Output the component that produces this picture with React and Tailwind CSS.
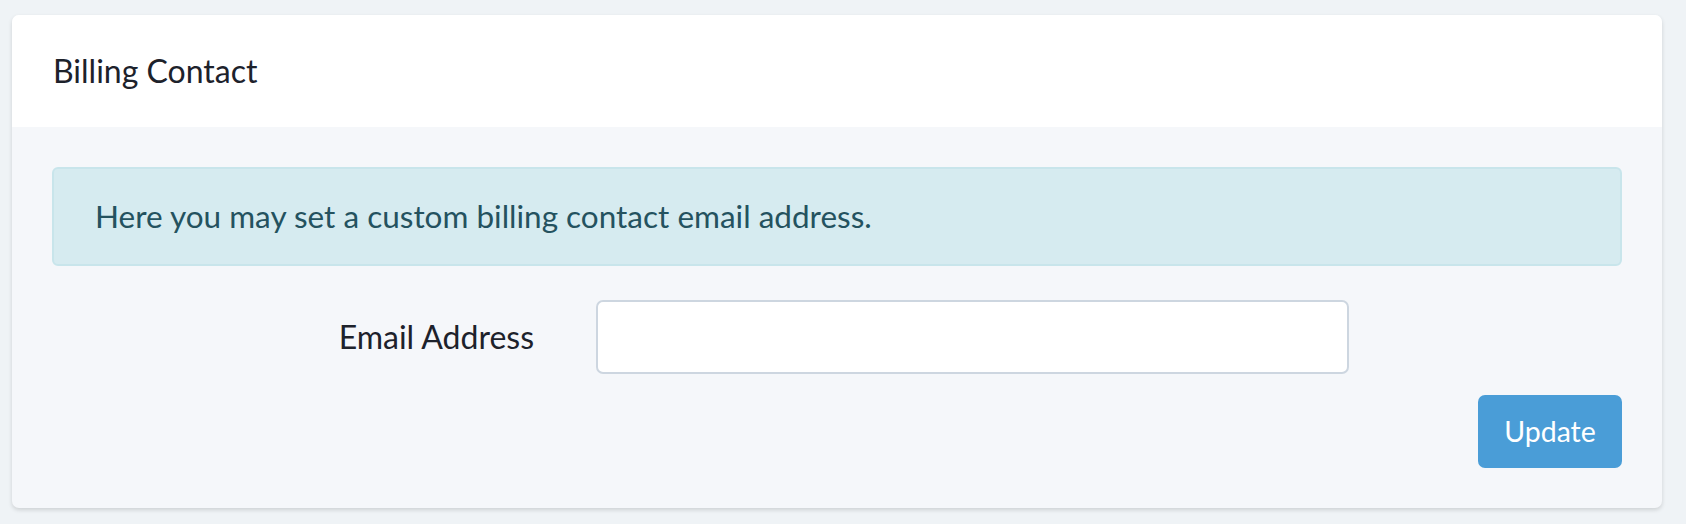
import React from 'react';

const BillingContact = () => {
  return (
    <div className="min-h-[524px] bg-[#eff3f6] px-[12px] pt-[15px] pb-[16px] font-['Lato',_'Noto_Sans',_sans-serif]">
      <div className="w-[1650px] rounded-[7px] bg-[#f5f7fa] shadow-[0_2px_4px_rgba(0,0,0,0.14)]">
        {/* header */}
        <div className="flex h-[112px] items-center rounded-t-[7px] bg-white px-[41px] text-[32px] text-[#1d222b]">
          Billing Contact
        </div>

        {/* body */}
        <div className="px-[40px] pt-[40px] pb-[40px]">
          <div className="flex h-[99px] items-center rounded-[6px] border-2 border-[#c8e5eb] bg-[#d6ebf0] px-[41px] text-[31.5px] text-[#24525f]">
            Here you may set a custom billing contact email address.
          </div>

          <div className="mt-[34px] flex items-center">
            <label className="w-[482px] text-right text-[32px] text-[#1d222b]">Email Address</label>
            <input
              type="email"
              className="ml-[62px] h-[74px] w-[753px] rounded-[7px] border-2 border-[#cdd6e0] bg-white px-4 text-[28px] outline-none"
            />
          </div>

          <div className="mt-[21px] flex justify-end">
            <button className="h-[73px] w-[144px] rounded-[7px] bg-[#4a9dd7] text-[28.5px] text-white">
              Update
            </button>
          </div>
        </div>
      </div>
    </div>
  );
};

export default function App() {
  return <BillingContact />;
}
